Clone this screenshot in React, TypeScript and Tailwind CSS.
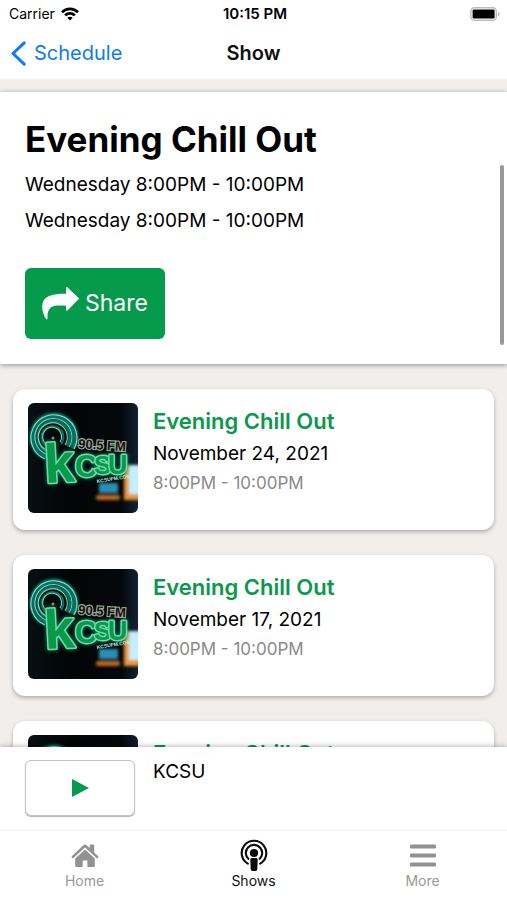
const episodes = [
  { date: "November 24, 2021", time: "8:00PM - 10:00PM" },
  { date: "November 17, 2021", time: "8:00PM - 10:00PM" },
  { date: "November 10, 2021", time: "8:00PM - 10:00PM" },
];

function WifiIcon() {
  return (
    <svg viewBox="0 0 18 14" className="h-[14px] w-[18px]" fill="none" stroke="#000" strokeWidth="2.7" aria-hidden="true">
      <path d="M1 5.2C5.4.7 12.6.7 17 5.2" />
      <path d="M4.1 8.4c2.8-2.7 7-2.7 9.8 0" />
      <path d="M9 13.6 6.3 10.8c1.5-1.4 3.9-1.4 5.4 0z" fill="#000" stroke="none" />
    </svg>
  );
}

function BatteryIcon() {
  return (
    <svg viewBox="0 0 31 14" className="h-[14px] w-[31px]" aria-hidden="true">
      <rect x="0.9" y="0.7" width="25.4" height="12.6" rx="3.6" fill="#fff" stroke="#bdbdbd" strokeWidth="1.4" />
      <rect x="2.6" y="2.4" width="22" height="9.2" rx="1.4" fill="#000" />
      <path d="M27.8 4.8c2.6.8 2.6 3.6 0 4.4z" fill="#bdbdbd" />
    </svg>
  );
}

function ShareIcon() {
  return (
    <svg viewBox="0 0 37 33" className="h-[33px] w-[37px]" fill="#fff" aria-hidden="true">
      <path d="M24 .9c0-.8.8-1.1 1.4-.6l11.2 10.6c.4.4.4.9 0 1.3L25.4 23.4c-.6.5-1.4.2-1.4-.6V18.7C15.5 18.4 10.500 18.600 8 21.200 5.600 23.800 5.400 27.600 5.500 31.500c0 1-.9 1.200-1.400.4C1.200 27.800-.3 22.400.3 17.600 1.400 8.800 10.500 6.600 24 6.700z" />
    </svg>
  );
}

function HomeIcon() {
  return (
    <svg viewBox="0 0 28 32" className="h-8 w-7" fill="#929292" aria-hidden="true">
      <path d="M.8 17.2 12.6 5.9c.8-.7 2-.7 2.800 0l3.300 3.100V6.400c0-.5.3-.8.8-.8h2.900c.5 0 .8.3.8.8v7l4 3.800c.4.4.4.8.1 1.100l-.7.8c-.3.3-.8.3-1.100 0L14 8.500 2.500 19.100c-.3.3-.8.3-1.100 0l-.7-.8c-.3-.3-.3-.7.1-1.100z" />
      <path d="m14 10.500 9.800 9.100v7.200c0 .8-.5 1.200-1.200 1.200h-6.200v-6.600h-4.700V28H5.500c-.8 0-1.300-.4-1.300-1.200v-7.200z" />
    </svg>
  );
}

function ShowsIcon() {
  return (
    <svg viewBox="0 0 28 32" className="h-8 w-7" fill="none" stroke="#0b0b0b" strokeWidth="2.1" aria-hidden="true">
      <path d="M8.600 25.100a12.300 12.300 0 1 1 10.800 0" />
      <path d="M8.900 20.500a8.200 8.200 0 1 1 10.200 0" />
      <circle cx="14" cy="14" r="4.1" fill="#0b0b0b" stroke="none" />
      <path d="M10.300 21c0-1.500.8-2 2-2h3.400c1.200 0 2 .5 2 2l-.4 9c-.1 1.300-.8 1.900-1.900 1.900h-2.800c-1.100 0-1.800-.6-1.900-1.900z" fill="#0b0b0b" stroke="none" />
    </svg>
  );
}

function MoreIcon() {
  return (
    <svg viewBox="0 0 28 32" className="h-8 w-7" fill="#929292" aria-hidden="true">
      <rect x="1" y="5.5" width="26" height="4" rx="1.3" />
      <rect x="1" y="14.500" width="26" height="4" rx="1.3" />
      <rect x="1" y="23.500" width="26" height="4" rx="1.3" />
    </svg>
  );
}

function StationArt() {
  return (
    <svg viewBox="0 0 110 110" className="size-[110px] shrink-0 rounded-md" role="img" aria-label="KCSU 90.5 FM">
      <defs>
        <filter id="glow" x="-30%" y="-30%" width="160%" height="160%">
          <feGaussianBlur stdDeviation="1.8" />
        </filter>
        <filter id="soft" x="-30%" y="-30%" width="160%" height="160%">
          <feGaussianBlur stdDeviation="1.6" />
        </filter>
        <linearGradient id="night" x1="0" y1="0" x2="1" y2="0">
          <stop offset="0" stopColor="#071013" />
          <stop offset="0.4" stopColor="#030405" />
          <stop offset="0.85" stopColor="#05080b" />
          <stop offset="1" stopColor="#122133" />
        </linearGradient>
      </defs>
      <rect width="110" height="110" fill="url(#night)" />
      <g filter="url(#soft)">
        <rect x="71" y="80" width="19" height="10" fill="#2c8fb4" />
        <rect x="68" y="92" width="24" height="5" rx="2" fill="#c06c1c" />
        <rect x="96" y="62" width="18" height="35" fill="#e8963a" />
        <rect x="101" y="62" width="14" height="29" fill="#c4efff" />
      </g>
      <g fill="none">
        <path d="M18 54A21.500 21.500 0 1 1 45 44" stroke="#12a08a" strokeWidth="5" filter="url(#glow)" />
        <path d="M18 54A21 21 0 1 1 44 45" stroke="#0a6f5c" strokeWidth="4" />
        <path d="M17 56A23 23 0 1 1 46 46" stroke="#7fe6cd" strokeWidth="1.1" />
        <path d="M18 51A18.500 18.500 0 1 1 41 44" stroke="#6fdcc3" strokeWidth="1.1" />
        <path d="M18 48A16 16 0 1 1 39 43" stroke="#0a6f5c" strokeWidth="3" />
        <path d="M18 47A14.500 14.500 0 1 1 37 42" stroke="#6fdcc3" strokeWidth="1.1" />
        <path d="M18 43A11 11 0 1 1 33 41" stroke="#0a6f5c" strokeWidth="2" />
        <path d="M18 41A9.500 9.500 0 1 1 32 39" stroke="#6fdcc3" strokeWidth="1.1" />
      </g>
      <circle cx="25" cy="35" r="1.5" fill="#b98060" />
      <g
        className="font-['Liberation_Sans',sans-serif] font-bold drop-shadow-[0_0_2px_#159a78]"
        fill="#089a48"
        stroke="#6fdaa9"
        strokeWidth="3"
        strokeLinejoin="round"
        paintOrder="stroke"
      >
        <text x="17" y="80" fontSize="55" transform="rotate(-3 17 80)">k</text>
        <text x="47" y="74" fontSize="31">C</text>
        <text x="66" y="71" fontSize="26">S</text>
        <text x="80" y="71" fontSize="27">U</text>
      </g>
      <g className="font-['Liberation_Sans',sans-serif] font-bold">
        <text x="50" y="45" fontSize="13" stroke="#8fb09c" strokeWidth="2.2" paintOrder="stroke" fill="#24090d" transform="rotate(4 50 45)">90.5 FM</text>
        <text x="69" y="80" fontSize="5" fill="#b5f3e0" transform="rotate(-9 69 80)">KCSUFM.COM</text>
      </g>
    </svg>
  );
}

function EpisodeCard({ date, time }: { date: string; time: string }) {
  return (
    <li className="flex gap-[15px] rounded-xl bg-white px-[15px] pt-[14px] pb-[17px] shadow-[0_2px_4px_rgba(0,0,0,0.28)]">
      <StationArt />
      <div className="pt-1">
        <h2 className="text-[22px] leading-7 font-semibold text-[#0a984b]">Evening Chill Out</h2>
        <p className="mt-[5px] text-[19px] leading-7 text-black">{date}</p>
        <p className="mt-[3px] text-[17px] leading-6 text-[#8a8a8a]">{time}</p>
      </div>
    </li>
  );
}

export default function App() {
  return (
    <div className="flex h-screen flex-col overflow-hidden bg-white font-[Inter,'Liberation_Sans',sans-serif] text-black">
      <div className="grid h-[27px] shrink-0 grid-cols-3 items-center pr-[6px] pl-[9px] text-sm">
        <div className="flex items-center gap-[6px]">
          <span>Carrier</span>
          <WifiIcon />
        </div>
        <span className="text-center text-[15px] font-semibold">10:15 PM</span>
        <div className="flex justify-end">
          <BatteryIcon />
        </div>
      </div>

      <header className="grid h-[52px] shrink-0 grid-cols-3 items-center px-[11px]">
        <button type="button" className="flex items-center gap-2 text-xl text-[#0b7cf4]">
          <svg viewBox="0 0 15 25" className="h-[25px] w-[15px]" fill="none" stroke="currentColor" strokeWidth="3" strokeLinecap="round" strokeLinejoin="round" aria-hidden="true">
            <path d="M13.200 1.800 2 12.500l11.200 10.700" />
          </svg>
          Schedule
        </button>
        <h1 className="text-center text-xl font-semibold text-[#111]">Show</h1>
      </header>

      <main className="relative min-h-0 flex-1 overflow-hidden bg-[#f1eeec]">
        <section className="mt-[13px] bg-white px-[25px] pt-6 pb-[25px] shadow-[0_1px_5px_rgba(0,0,0,0.4)]">
          <h2 className="text-[35px] leading-[46px] font-bold">Evening Chill Out</h2>
          <p className="mt-[5px] text-[19px] leading-9">Wednesday 8:00PM - 10:00PM</p>
          <p className="text-[19px] leading-9">Wednesday 8:00PM - 10:00PM</p>
          <button type="button" className="mt-[29px] flex h-[71px] items-center gap-[6px] rounded-md bg-[#059a4c] px-[17px] text-[23px] text-white">
            <ShareIcon />
            Share
          </button>
        </section>
        <ul className="flex flex-col gap-[25px] px-[13px] pt-[25px]">
          {episodes.map((episode) => (
            <EpisodeCard key={episode.date} date={episode.date} time={episode.time} />
          ))}
        </ul>
        <div className="absolute top-[86px] right-[3px] h-[180px] w-1 rounded-full bg-[#999]" />
      </main>

      <section aria-label="Player" className="relative flex h-[82px] shrink-0 gap-[18px] bg-white px-[25px] pt-[13px] shadow-[0_0_6px_rgba(0,0,0,0.35)]">
        <button type="button" aria-label="Play" className="flex h-14 w-[110px] items-center justify-center rounded-md border border-[#c4c4c4] bg-white shadow-[0_1px_1px_rgba(0,0,0,0.3)]">
          <svg viewBox="0 0 17 18" className="h-[18px] w-[17px]" fill="#059a4c" aria-hidden="true">
            <path d="M0 0 17 9 0 18z" />
          </svg>
        </button>
        <p className="text-[19px] leading-6">KCSU</p>
      </section>

      <nav className="relative grid h-[71px] shrink-0 grid-cols-3 border-t-2 border-[#f7f7f7] bg-white pt-2 text-sm">
        <a href="#home" className="flex flex-col items-center text-[#999]">
          <HomeIcon />
          <span>Home</span>
        </a>
        <a href="#shows" aria-current="page" className="flex flex-col items-center text-[#111]">
          <ShowsIcon />
          <span>Shows</span>
        </a>
        <a href="#more" className="flex flex-col items-center text-[#999]">
          <MoreIcon />
          <span>More</span>
        </a>
      </nav>
    </div>
  );
}
